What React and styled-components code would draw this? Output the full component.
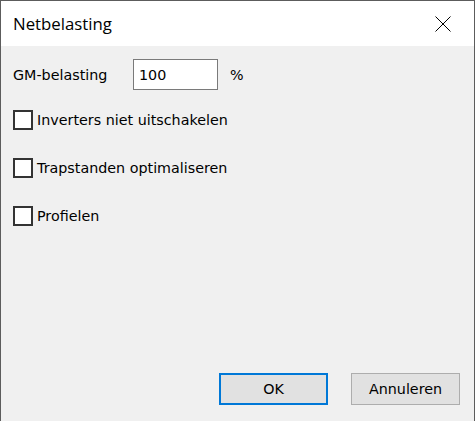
import { useState } from 'react';
import styled, { createGlobalStyle } from 'styled-components';

const GlobalStyle = createGlobalStyle`
  html, body {
    margin: 0;
    padding: 0;
    background: #f0f0f0;
  }
`;

const Window = styled.div`
  width: 475px;
  height: 421px;
  box-sizing: border-box;
  border: 1px solid #5c5c5c;
  border-bottom: none;
  display: flex;
  flex-direction: column;
  background: #f0f0f0;
  font-family: "DejaVu Sans", Tahoma, sans-serif;
  font-size: 14.3px;
  color: #000;
`;

const TitleBar = styled.div`
  height: 45px;
  background: #fff;
  display: flex;
  align-items: center;
  justify-content: space-between;
  padding-left: 12px;
`;

const Title = styled.span`
  font-family: "Open Sans", "Noto Sans", sans-serif;
  font-size: 16.8px;
  margin-top: -1px;
`;

const CloseButton = styled.button`
  width: 46px;
  height: 45px;
  border: none;
  background: transparent;
  display: flex;
  align-items: center;
  justify-content: center;
  padding: 0;
  margin-right: 8px;
`;

const Body = styled.div`
  flex: 1;
  display: flex;
  flex-direction: column;
  padding: 13px 14px 16px 12px;
`;

const FieldRow = styled.div`
  display: flex;
  align-items: center;
  height: 31px;
  margin-bottom: 20px;
`;

const Label = styled.span`
  width: 120px;
`;

const NumberInput = styled.input`
  width: 85px;
  height: 31px;
  box-sizing: border-box;
  border: 1px solid #7a7a7a;
  background: #fff;
  font: inherit;
  padding: 0 5px;
  outline: none;
`;

const Unit = styled.span`
  margin-left: 12px;
`;

const CheckList = styled.div`
  display: flex;
  flex-direction: column;
  gap: 28px;
`;

const CheckRow = styled.label`
  display: flex;
  align-items: center;
  height: 20px;
  gap: 4px;
`;

const Box = styled.span`
  width: 20px;
  height: 20px;
  box-sizing: border-box;
  border: 2px solid #333;
  background: #fff;
  display: flex;
  align-items: center;
  justify-content: center;
`;

const ButtonBar = styled.div`
  margin-top: auto;
  display: flex;
  justify-content: flex-end;
  gap: 23px;
`;

const Button = styled.button`
  width: 109px;
  height: 32px;
  box-sizing: border-box;
  background: #e1e1e1;
  border: ${(p) => (p.$primary ? '2px solid #0078d7' : '1px solid #adadad')};
  font: inherit;
  color: #000;
  padding: 0;
`;

const CheckItem = ({ label }) => {
  const [checked, setChecked] = useState(false);
  return (
    <CheckRow onClick={() => setChecked(!checked)}>
      <Box>
        {checked ? (
          <svg width="14" height="14" viewBox="0 0 14 14">
            <path d="M2 7l3 3 7-7" stroke="#000" strokeWidth="2" fill="none" />
          </svg>
        ) : null}
      </Box>
      <span>{label}</span>
    </CheckRow>
  );
};

export default function App() {
  const [value, setValue] = useState('100');
  return (
    <>
      <GlobalStyle />
      <Window>
        <TitleBar>
          <Title>Netbelasting</Title>
          <CloseButton aria-label="Sluiten">
            <svg width="16" height="16" viewBox="0 0 16 16">
              <path d="M0.5 0.5L15.5 15.5M15.5 0.5L0.5 15.5" stroke="#000" strokeWidth="1" />
            </svg>
          </CloseButton>
        </TitleBar>
        <Body>
          <FieldRow>
            <Label>GM-belasting</Label>
            <NumberInput value={value} onChange={(e) => setValue(e.target.value)} />
            <Unit>%</Unit>
          </FieldRow>
          <CheckList>
            <CheckItem label="Inverters niet uitschakelen" />
            <CheckItem label="Trapstanden optimaliseren" />
            <CheckItem label="Profielen" />
          </CheckList>
          <ButtonBar>
            <Button $primary>OK</Button>
            <Button>Annuleren</Button>
          </ButtonBar>
        </Body>
      </Window>
    </>
  );
}
